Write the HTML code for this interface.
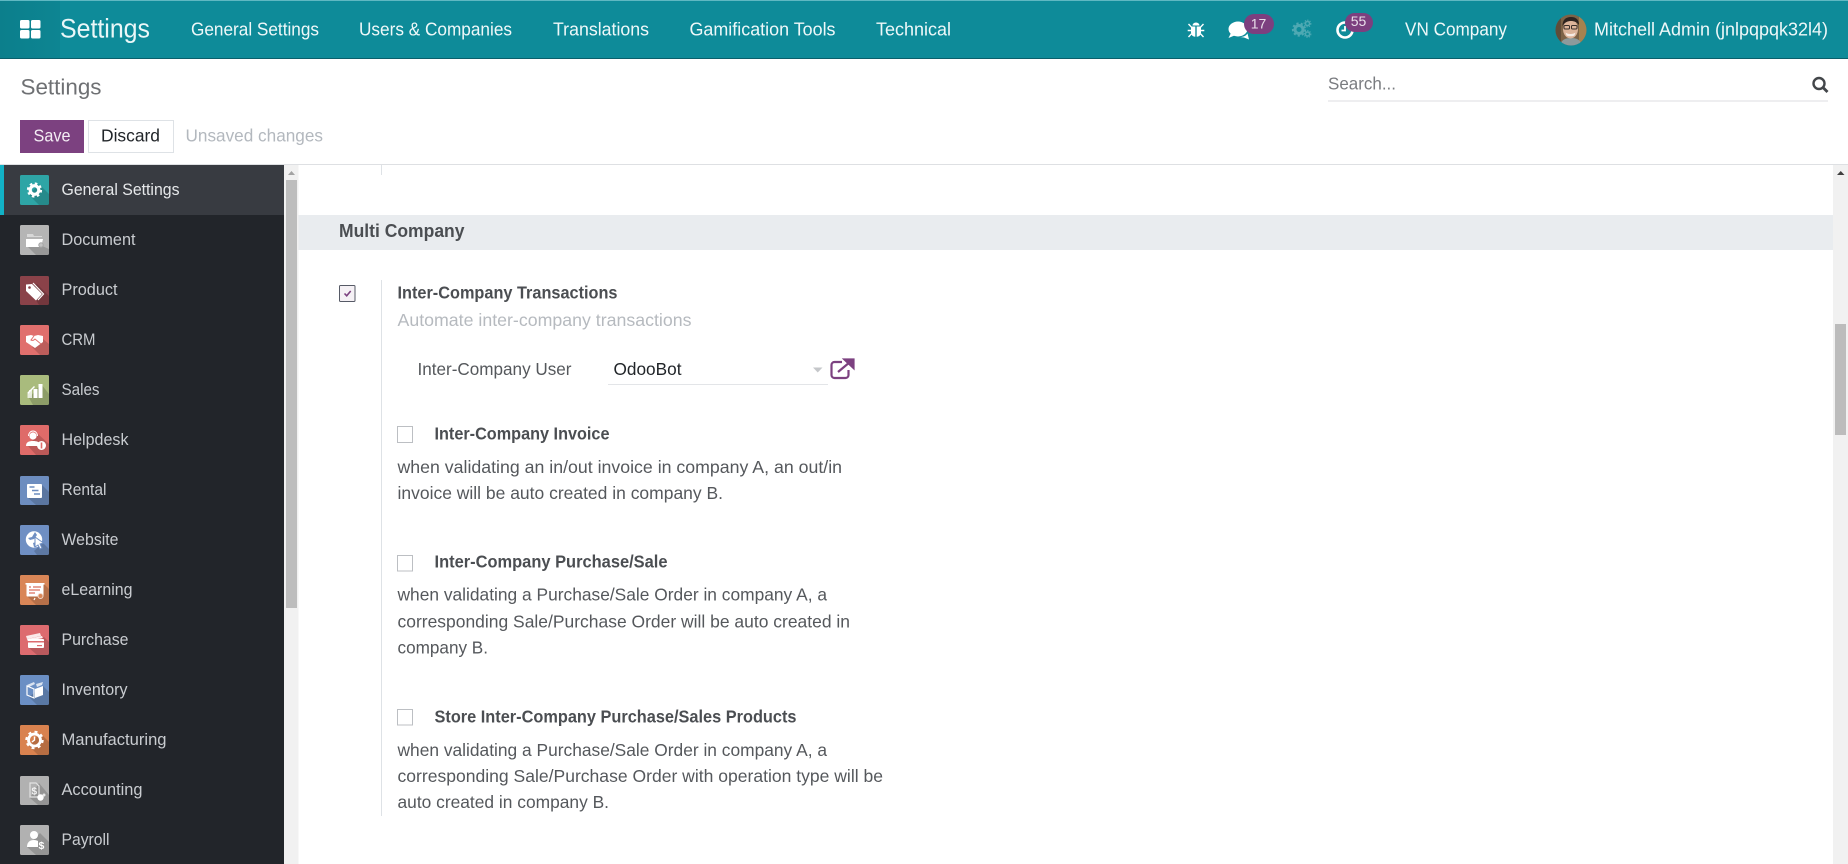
<!DOCTYPE html>
<html lang="en">
<head>
<meta charset="utf-8">
<title>Settings</title>
<style>
html,body{margin:0;padding:0;width:1848px;height:864px;overflow:hidden;background:#fff}
svg{display:block;position:absolute;left:0;top:0}
text{font-family:"Liberation Sans",Arial,sans-serif;white-space:pre}
.nav{font-size:18px;fill:#eef8f9}
.side{font-size:16.5px;fill:#c9ccd0}
.reg{font-size:17.5px;fill:#55585c}
.bold{font-size:17.5px;fill:#4b4e52;font-weight:700}
.g{fill:#fff}
.s{fill:rgba(0,0,0,.16)}
</style>
</head>
<body>
<svg xmlns="http://www.w3.org/2000/svg" width="1848" height="864" viewBox="0 0 1848 864">
<defs>
<linearGradient id="bar" x1="0" y1="0" x2="1" y2="0"><stop offset="0" stop-color="#0c7f8c"/><stop offset="1" stop-color="#0d8592"/></linearGradient>
<clipPath id="av"><circle cx="1571" cy="30" r="15.5"/></clipPath>
</defs>

<!-- top bar -->
<rect x="0" y="0" width="1848" height="59" fill="#0e8b99"/>
<rect x="0" y="0" width="1848" height="1" fill="#5fb8c2"/>
<rect x="0" y="1" width="60" height="57" fill="url(#bar)"/>
<rect x="0" y="58" width="1848" height="1" fill="#0a5f6b"/>
<g fill="#fff">
<rect x="20" y="20" width="9.500" height="8.500" rx="1.500"/><rect x="31" y="20" width="9.500" height="8.500" rx="1.500"/>
<rect x="20" y="30" width="9.500" height="8.500" rx="1.500"/><rect x="31" y="30" width="9.500" height="8.500" rx="1.500"/>
</g>
<text x="60" y="37.500" textLength="90" lengthAdjust="spacingAndGlyphs" style="font-size:26.5px;fill:#eaf7f8">Settings</text>
<text class="nav" x="191" y="35.700" textLength="128" lengthAdjust="spacingAndGlyphs">General Settings</text>
<text class="nav" x="359" y="35.700" textLength="153" lengthAdjust="spacingAndGlyphs">Users &amp; Companies</text>
<text class="nav" x="553" y="35.700" textLength="96" lengthAdjust="spacingAndGlyphs">Translations</text>
<text class="nav" x="689.500" y="35.700" textLength="146" lengthAdjust="spacingAndGlyphs">Gamification Tools</text>
<text class="nav" x="876" y="35.700" textLength="75" lengthAdjust="spacingAndGlyphs">Technical</text>

<!-- systray -->
<g fill="#fff" stroke="none">
<!-- bug -->
<path d="M1192.500 25.500a3.500 3 0 0 1 7 0z"/>
<path d="M1191 26.500h4.300v10.300c-2.600-.2-4.300-1.800-4.300-4.500zM1196.700 26.500h4.300v5.800c0 2.700-1.700 4.300-4.300 4.500z"/>
<path d="M1188.500 24l3 3.200M1203.500 24l-3 3.200M1187.700 30.500h3.500M1204.300 30.500h-3.500M1188.500 37l3-3.200M1203.500 37l-3-3.200" stroke="#fff" stroke-width="1.400" fill="none"/>
<!-- chat -->
<ellipse cx="1238" cy="29" rx="9.500" ry="7.500"/>
<path d="M1231 33l-2.500 5 6-2.500z"/>
<path d="M1240 37c3.500 0 6-1.200 7.500-3.500l1.500 6-5-2z"/>
</g>
<rect x="1244" y="14" width="30" height="20" rx="10" fill="#7c3f7f"/>
<text x="1258.500" y="28.500" text-anchor="middle" style="font-size:14px;fill:#e9dfea">17</text>
<!-- gears -->
<g fill="none" stroke="#4ea9b3">
<circle cx="1299" cy="29.500" r="4" stroke-width="3"/><circle cx="1299" cy="29.500" r="6.200" stroke-width="1.800" stroke-dasharray="2.200 2.200"/>
<circle cx="1307.500" cy="23.500" r="2.100" stroke-width="1.600"/><circle cx="1307.500" cy="23.500" r="3.400" stroke-width="1" stroke-dasharray="1.300 1.300"/>
<circle cx="1307.500" cy="34" r="2.100" stroke-width="1.600"/><circle cx="1307.500" cy="34" r="3.400" stroke-width="1" stroke-dasharray="1.300 1.300"/>
</g>
<!-- activity clock -->
<circle cx="1345" cy="30" r="7.500" fill="none" stroke="#fff" stroke-width="2.600"/>
<path d="M1345 26v4.500h-3.500" fill="none" stroke="#fff" stroke-width="1.800"/>
<rect x="1345" y="13" width="28" height="19" rx="9.500" fill="#7c3f7f"/>
<text x="1358.500" y="26" text-anchor="middle" style="font-size:14px;fill:#e9dfea">55</text>
<text class="nav" x="1405" y="35.700" textLength="102" lengthAdjust="spacingAndGlyphs">VN Company</text>
<!-- avatar -->
<g clip-path="url(#av)">
<rect x="1555" y="14" width="32" height="32" fill="#7d6347"/>
<rect x="1579" y="14" width="8" height="32" fill="#a5824f"/>
<rect x="1555" y="14" width="6" height="32" fill="#5f4c38"/>
<path d="M1560 46c1-6 5-8 11-8s10 2 11 8z" fill="#8d9a9c"/>
<ellipse cx="1570.500" cy="29" rx="7.500" ry="9.500" fill="#dcb49a"/>
<path d="M1562.500 26c0-6 3-9 8.500-9s8 3 8 8c-2-3-5-4-8-4s-6 1-8.500 5z" fill="#2d2420"/>
<rect x="1564" y="25.500" width="5.500" height="3.500" rx="1" fill="none" stroke="#3a302b" stroke-width="1"/>
<rect x="1571.500" y="25.500" width="5.500" height="3.500" rx="1" fill="none" stroke="#3a302b" stroke-width="1"/>
<path d="M1565.500 32.500c2 2 8 2 10 0l-1 3c-2 1-6 1-8 0z" fill="#f6ece5"/>
</g>
<text class="nav" x="1594" y="35.700" textLength="234" lengthAdjust="spacingAndGlyphs">Mitchell Admin (jnlpqpqk32l4)</text>

<!-- control panel -->
<text x="20.500" y="94.500" textLength="81" lengthAdjust="spacingAndGlyphs" style="font-size:22px;fill:#6e7073">Settings</text>
<rect x="20" y="120" width="64" height="33" fill="#7c4180"/>
<text x="33.500" y="141.500" textLength="37" lengthAdjust="spacingAndGlyphs" style="font-size:17.500px;fill:#f4edf4">Save</text>
<rect x="88.500" y="120.500" width="85" height="32" fill="#fff" stroke="#dee2e6"/>
<text x="101" y="141.500" textLength="59" lengthAdjust="spacingAndGlyphs" style="font-size:17.500px;fill:#212529">Discard</text>
<text x="185.500" y="141.500" textLength="137.500" lengthAdjust="spacingAndGlyphs" style="font-size:17.500px;fill:#b3b8be">Unsaved changes</text>
<text x="1328" y="89.500" textLength="68" lengthAdjust="spacingAndGlyphs" style="font-size:17.500px;fill:#7a7c80">Search...</text>
<rect x="1328" y="100.500" width="500" height="1" fill="#dcdee0"/>
<circle cx="1819" cy="83.500" r="5.500" fill="none" stroke="#43464a" stroke-width="2.400"/>
<path d="M1823 87.500l4.500 4.500" stroke="#43464a" stroke-width="2.800" fill="none"/>
<rect x="0" y="164" width="1848" height="1" fill="#dee0e3"/>

<!-- sidebar -->
<rect x="0" y="165" width="284" height="699" fill="#22252a"/>
<rect x="0" y="165" width="284" height="50" fill="#383b41"/>
<rect x="0" y="165" width="4" height="50" fill="#12b2c6"/>
<rect x="284" y="165" width="14.500" height="699" fill="#f1f1f1"/>
<rect x="286" y="180" width="11" height="428" fill="#bdbdbd"/>
<path d="M288 175h7l-3.500-4z" fill="#a3a3a3"/>

<text class="side" x="61.500" y="195" textLength="118" lengthAdjust="spacingAndGlyphs" style="fill:#e6e8ea">General Settings</text>
<text class="side" x="61.500" y="245" textLength="74" lengthAdjust="spacingAndGlyphs">Document</text>
<text class="side" x="61.500" y="295" textLength="56" lengthAdjust="spacingAndGlyphs">Product</text>
<text class="side" x="61.500" y="345" textLength="34" lengthAdjust="spacingAndGlyphs">CRM</text>
<text class="side" x="61.500" y="395" textLength="38" lengthAdjust="spacingAndGlyphs">Sales</text>
<text class="side" x="61.500" y="445" textLength="67" lengthAdjust="spacingAndGlyphs">Helpdesk</text>
<text class="side" x="61.500" y="495" textLength="45" lengthAdjust="spacingAndGlyphs">Rental</text>
<text class="side" x="61.500" y="545" textLength="57" lengthAdjust="spacingAndGlyphs">Website</text>
<text class="side" x="61.500" y="595" textLength="71" lengthAdjust="spacingAndGlyphs">eLearning</text>
<text class="side" x="61.500" y="645" textLength="67" lengthAdjust="spacingAndGlyphs">Purchase</text>
<text class="side" x="61.500" y="695" textLength="66" lengthAdjust="spacingAndGlyphs">Inventory</text>
<text class="side" x="61.500" y="745" textLength="105" lengthAdjust="spacingAndGlyphs">Manufacturing</text>
<text class="side" x="61.500" y="795" textLength="81" lengthAdjust="spacingAndGlyphs">Accounting</text>
<text class="side" x="61.500" y="845" textLength="48" lengthAdjust="spacingAndGlyphs">Payroll</text>

<!-- General Settings icon -->
<g transform="translate(20,175)">
<rect width="29" height="30" rx="1.500" fill="#2ea5a6"/>
<path class="s" d="M9 20L19 9l10 10v11H19z"/>
<circle cx="14.500" cy="15" r="4.300" fill="none" stroke="#fff" stroke-width="3.200"/>
<circle cx="14.500" cy="15" r="6.600" fill="none" stroke="#fff" stroke-width="2" stroke-dasharray="2.600 2.600"/>
</g>
<!-- Document -->
<g transform="translate(20,225)">
<rect width="29" height="30" rx="1.500" fill="#b5b5b5"/>
<path class="s" d="M7 21h15l7 3v6H16z"/>
<path d="M7 11v-2h6l1 2h8v1H7z" fill="#d8d8d8"/>
<path d="M6 14h17l-2 8H6z" fill="#fff"/>
<circle cx="21" cy="20" r="2.200" fill="#c4c4c4" stroke="#a5a5a5"/>
</g>
<!-- Product -->
<g transform="translate(20,276)">
<rect width="29" height="29" rx="1.500" fill="#8a4249"/>
<path class="s" d="M9 12l8-4 12 12v9H19z"/>
<path d="M6 8.500l6-.5 10 10-6 6.500L6 15z" fill="#fff"/>
<path d="M13 7l10.500 11-5.500 6" fill="none" stroke="#fff" stroke-width="1.200"/>
<circle cx="9.500" cy="11.500" r="1.300" fill="#8a4249"/>
</g>
<!-- CRM -->
<g transform="translate(20,325)">
<rect width="29" height="30" rx="1.500" fill="#e06f6d"/>
<path class="s" d="M12 22l11-8 6 5v11H20z"/>
<path d="M6 11l5-1 3 1 4-1 5 1v6l-8 6-9-6z" fill="#fff"/>
<path d="M14 11l-3 4c2 1 3 0 4-1l6 5" fill="none" stroke="#e06f6d" stroke-width="1"/>
</g>
<!-- Sales -->
<g transform="translate(20,375)">
<rect width="29" height="30" rx="1.500" fill="#a9bb7d"/>
<path class="s" d="M21 9l8 10v11H13L9 23z"/>
<path d="M9 15v2h-1.500v6H12v-8z" fill="#fff" opacity=".75"/>
<rect x="13.500" y="14" width="4" height="9" fill="#fff"/>
<rect x="18.500" y="9" width="4" height="14" fill="#fff"/>
<path d="M8 17l6-6 1 1-7 7z" fill="#fff"/>
</g>
<!-- Helpdesk -->
<g transform="translate(20,425)">
<rect width="29" height="30" rx="1.500" fill="#df6b69"/>
<path class="s" d="M8 21l10-12 11 10v11H16z"/>
<circle cx="13" cy="11" r="3.600" fill="#fff"/>
<path d="M8.500 11a4.500 5 0 0 1 9 0" fill="none" stroke="#fff" stroke-width="1"/>
<path d="M6 21c0-4 3-5 7-5s6 1 7 3v2z" fill="#fff"/>
<circle cx="21.500" cy="20.500" r="4.500" fill="#fff"/>
<rect x="20.700" y="17.500" width="1.600" height="6" fill="#df6b69"/>
</g>
<!-- Rental -->
<g transform="translate(20,476)">
<rect width="29" height="29" rx="1.500" fill="#6d8dbf"/>
<path class="s" d="M21 8l8 8v13H16l-9-8z"/>
<rect x="7" y="8" width="15" height="14" rx="1" fill="#fff"/>
<path d="M9.500 11h5M12 14.500h6.500M14 18h6" stroke="#6d8dbf" stroke-width="1.500" fill="none"/>
</g>
<!-- Website -->
<g transform="translate(20,525)">
<rect width="29" height="30" rx="1.500" fill="#6f8fc3"/>
<path class="s" d="M23 18l6 6v6H17l-3-4z"/>
<circle cx="14" cy="14.500" r="8.200" fill="#fff"/>
<path d="M8 13l4-1 3-5 2 3-3 4-4 1zM13 18l3-1 1 3-3 2z" fill="#6f8fc3"/>
<path d="M15 12l8.500 6-3.500 1 2 4-2 1-2-4-3 2z" fill="#fff" stroke="#6f8fc3" stroke-width="1"/>
</g>
<!-- eLearning -->
<g transform="translate(20,575)">
<rect width="29" height="30" rx="1.500" fill="#d98657"/>
<path class="s" d="M23 8l6 6v16H16l-8-8z"/>
<rect x="6.500" y="8.500" width="17" height="13" rx="1" fill="#fff"/>
<rect x="5.500" y="8" width="19" height="1.600" fill="#fff"/>
<path d="M9 12h2M13 12h8M9 15h11M9 18h6" stroke="#d9705f" stroke-width="1.300" fill="none"/>
<path d="M15 23l-1 2" stroke="#fff" stroke-width="1.200"/>
<circle cx="20.500" cy="21" r="2.500" fill="#d98657" stroke="#f2d9cb" stroke-width="1"/>
</g>
<!-- Purchase -->
<g transform="translate(20,625)">
<rect width="29" height="30" rx="1.500" fill="#dd6b6f"/>
<path class="s" d="M24 12l5 5v13H17l-8-7z"/>
<path d="M6 11l14-3 1 3-14 3z" fill="#fff" opacity=".85"/>
<path d="M7 14l15-3 .8 2-15 3z" fill="#fff" opacity=".9"/>
<rect x="8" y="14" width="16" height="9" rx="1" fill="#fff"/>
<rect x="8" y="16" width="16" height="1.500" fill="#dd6b6f"/>
<rect x="17" y="20" width="5" height="1.200" fill="#dd6b6f"/>
</g>
<!-- Inventory -->
<g transform="translate(20,675)">
<rect width="29" height="30" rx="1.500" fill="#6b8fc4"/>
<path class="s" d="M23 11l6 6v13H17l-8-8z"/>
<path d="M15 14l8-3v9l-8 3z" fill="#fff"/>
<path d="M14 14l-7-3v9l7 3z" fill="none" stroke="#fff" stroke-width="1.200"/>
<path d="M7 10l7-3 1 2-6 3zM16 9l7-2-1 3-5 2z" fill="#fff" opacity=".75"/>
</g>
<!-- Manufacturing -->
<g transform="translate(20,725)">
<rect width="29" height="30" rx="1.500" fill="#d9824f"/>
<path class="s" d="M20 8l9 9v13H18l-9-9z"/>
<circle cx="14.500" cy="15" r="6" fill="none" stroke="#fff" stroke-width="2.800"/>
<circle cx="14.500" cy="15" r="8.200" fill="none" stroke="#fff" stroke-width="2" stroke-dasharray="3 3.400"/>
<path d="M14.500 11.500V15l-2.500 2" stroke="#fff" stroke-width="1.400" fill="none"/>
</g>
<!-- Accounting -->
<g transform="translate(20,776)">
<rect width="29" height="29" rx="1.500" fill="#b1b1b1"/>
<path class="s" d="M19 7l10 12v10H18l-8-7z"/>
<path d="M10 7h6l3 3v11H10z" fill="none" stroke="#e2e2e2" stroke-width="1.200"/>
<text x="11.500" y="18.500" style="font-size:10px;font-weight:700;fill:#f4f4f4">$</text>
<circle cx="20.500" cy="21.500" r="3.200" fill="#fff"/>
<circle cx="24" cy="19" r="1.500" fill="#e6e6e6"/>
</g>
<!-- Payroll -->
<g transform="translate(20,825)">
<rect width="29" height="30" rx="1.500" fill="#b1b1b1"/>
<path class="s" d="M20 8l9 9v13H16l-9-8z"/>
<circle cx="14" cy="10" r="4" fill="#fff"/>
<path d="M7 22c0-5 3-7 7-7 2 0 3 .5 4 1v6z" fill="#fff"/>
<text x="18.500" y="24" style="font-size:10.500px;font-weight:700;fill:#fff">$</text>
</g>

<!-- main content -->
<rect x="381" y="165" width="1" height="10" fill="#dee2e6"/>
<rect x="298.500" y="215" width="1534.500" height="35" fill="#e9ecef"/>
<text class="bold" x="339" y="237" textLength="125.500" lengthAdjust="spacingAndGlyphs" style="font-size:18.500px">Multi Company</text>

<rect x="381" y="280" width="1" height="536" fill="#dee2e6"/>

<rect x="339.500" y="285.500" width="15.500" height="16" rx="1" fill="#f5f1f5" stroke="#565a66" stroke-width="1"/>
<path d="M344.500 293.500l2.200 2.300 4-4.800" fill="none" stroke="#7c4180" stroke-width="1.600"/>
<text class="bold" x="397.500" y="298.500" textLength="220" lengthAdjust="spacingAndGlyphs">Inter-Company Transactions</text>
<text class="reg" x="397.500" y="326" textLength="294" lengthAdjust="spacingAndGlyphs" style="fill:#b6babf">Automate inter-company transactions</text>

<text class="reg" x="417.500" y="375" textLength="154" lengthAdjust="spacingAndGlyphs">Inter-Company User</text>
<text class="reg" x="613.500" y="375" textLength="68" lengthAdjust="spacingAndGlyphs" style="fill:#212529">OdooBot</text>
<rect x="608" y="384" width="220" height="1" fill="#e3e5e8"/>
<path d="M813 367.500h9.500l-4.750 5z" fill="#c5c7ca"/>
<path d="M842 362h-7.500a3 3 0 0 0-3 3v10a3 3 0 0 0 3 3h11a3 3 0 0 0 3-3v-5" fill="none" stroke="#7c4180" stroke-width="2.200"/>
<path d="M838 372l12-10M844.500 359.500h9v8.500z" fill="#7c4180" stroke="#7c4180" stroke-width="2.200"/>

<rect x="397.500" y="426.500" width="15" height="16" fill="#fff" stroke="#bcbfc3"/>
<text class="bold" x="434.500" y="439.500" textLength="175" lengthAdjust="spacingAndGlyphs">Inter-Company Invoice</text>
<text class="reg" x="397.500" y="473" textLength="444.500" lengthAdjust="spacingAndGlyphs">when validating an in/out invoice in company A, an out/in</text>
<text class="reg" x="397.500" y="499" textLength="325.500" lengthAdjust="spacingAndGlyphs">invoice will be auto created in company B.</text>

<rect x="397.500" y="555.500" width="15" height="15.500" fill="#fff" stroke="#bcbfc3"/>
<text class="bold" x="434.500" y="567.500" textLength="233" lengthAdjust="spacingAndGlyphs">Inter-Company Purchase/Sale</text>
<text class="reg" x="397.500" y="600.500" textLength="429.500" lengthAdjust="spacingAndGlyphs">when validating a Purchase/Sale Order in company A, a</text>
<text class="reg" x="397.500" y="627.500" textLength="452.500" lengthAdjust="spacingAndGlyphs">corresponding Sale/Purchase Order will be auto created in</text>
<text class="reg" x="397.500" y="653.500" textLength="90.500" lengthAdjust="spacingAndGlyphs">company B.</text>

<rect x="397.500" y="709.500" width="15" height="15.500" fill="#fff" stroke="#bcbfc3"/>
<text class="bold" x="434.500" y="722.500" textLength="362" lengthAdjust="spacingAndGlyphs">Store Inter-Company Purchase/Sales Products</text>
<text class="reg" x="397.500" y="756" textLength="429.500" lengthAdjust="spacingAndGlyphs">when validating a Purchase/Sale Order in company A, a</text>
<text class="reg" x="397.500" y="782" textLength="485.500" lengthAdjust="spacingAndGlyphs">corresponding Sale/Purchase Order with operation type will be</text>
<text class="reg" x="397.500" y="808" textLength="211.500" lengthAdjust="spacingAndGlyphs">auto created in company B.</text>

<!-- main scrollbar -->
<rect x="1833" y="165" width="15" height="699" fill="#f1f1f1"/>
<rect x="1835" y="324" width="11" height="111" fill="#bcbcbc"/>
<path d="M1837 175h7.500l-3.750-4z" fill="#404040"/>
</svg>
</body>
</html>
